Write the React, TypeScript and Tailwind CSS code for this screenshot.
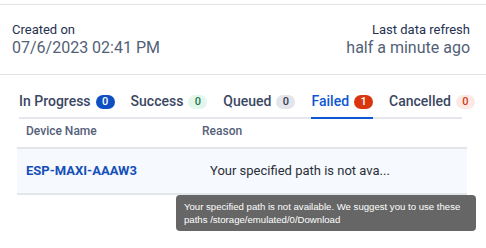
const tabs = [
  { label: "In Progress", count: 0, badge: "bg-[#0f4fc2] text-white", active: false },
  { label: "Success", count: 0, badge: "bg-[#e3f6ec] text-[#1d7a48]", active: false },
  { label: "Queued", count: 0, badge: "bg-[#e3e5ea] text-[#333a4a]", active: false },
  { label: "Failed", count: 1, badge: "bg-[#d9360f] text-white", active: true },
  { label: "Cancelled", count: 0, badge: "bg-[#fde9e3] text-[#d23a17]", active: false },
];

export default function App() {
  return (
    <div className="w-[486px] h-[248px] bg-white font-['Roboto','Noto_Sans',sans-serif] relative overflow-hidden">
      <div className="mt-1 border-t border-b border-[#e1e3e8] flex justify-between pl-3 pr-4 pt-[17px] pb-[16px]">
        <div>
          <div className="text-[13px] leading-4 text-[#25324f]">Created on</div>
          <div className="text-[16px] leading-5 text-[#535f77]">07/6/2023 02:41 PM</div>
        </div>
        <div className="text-right">
          <div className="text-[13px] leading-4 text-[#25324f]">Last data refresh</div>
          <div className="text-[16px] leading-5 text-[#535f77]">half a minute ago</div>
        </div>
      </div>

      <div className="ml-[19px] w-[443px] mt-[16px] flex gap-4 border-b-2 border-[#e6e7ec]">
        {tabs.map((t) => (
          <div
            key={t.label}
            className={
              t.active
                ? "flex items-center gap-[5px] pb-[5px] -mb-[2px] border-b-2 border-[#0d57d2] whitespace-nowrap"
                : "flex items-center gap-[5px] pb-[5px] whitespace-nowrap"
            }
          >
            <span
              className={
                t.active
                  ? "text-[14px] font-medium text-[#0d57d2]"
                  : "text-[14px] font-medium text-[#3b4763]"
              }
            >
              {t.label}
            </span>
            <span className={`h-[14px] min-w-[19px] px-[5px] rounded-full text-[11px] leading-[14px] text-center font-medium ${t.badge}`}>
              {t.count}
            </span>
          </div>
        ))}
      </div>

      <div className="ml-[17px] w-[450px] mt-[3px]">
        <div className="flex text-[12px] font-medium text-[#556079] pl-[9px] pb-[7px] border-b-2 border-[#e3e5ea]">
          <div className="w-[176px]">Device Name</div>
          <div>Reason</div>
        </div>
        <div className="flex items-center h-[46px] bg-[#f6f9fd] border-b-2 border-[#e3e5ea] pl-[9px]">
          <div className="w-[184px] text-[13px] font-bold text-[#1450b8]">ESP-MAXI-AAAW3</div>
          <div className="text-[13px] text-[#2a2f3a]">Your specified path is not ava...</div>
        </div>
      </div>

      <div className="absolute left-[176px] top-[195px] w-[300px] rounded-[4px] bg-[#666666] pl-2 pr-1 py-[5px] text-[9.6px] leading-[13px] text-white font-['Liberation_Sans',Arial,sans-serif]">
        Your specified path is not available. We suggest you to use these paths /storage/emulated/0/Download
      </div>
    </div>
  );
}
